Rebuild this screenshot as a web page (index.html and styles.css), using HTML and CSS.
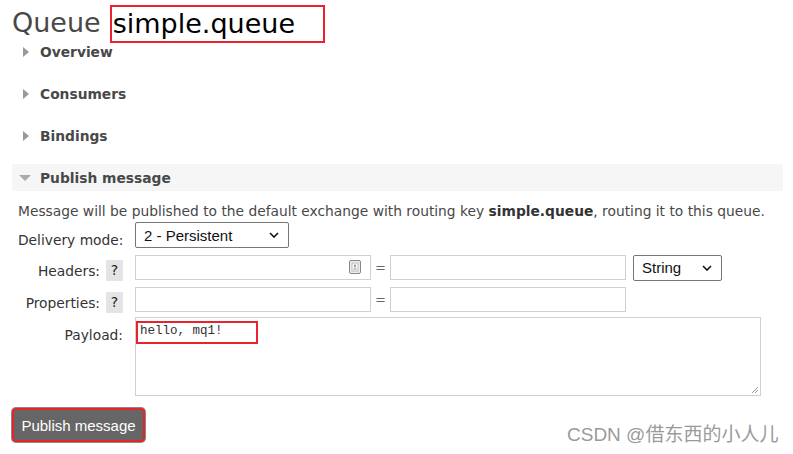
FILE: index.html
```html
<!DOCTYPE html>
<html>
<head>
<meta charset="utf-8">
<link rel="stylesheet" href="styles.css">
</head>
<body>
<div class="page">
  <h1 class="title"><span class="t-label">Queue</span><span class="t-name">simple.queue</span></h1>

  <div class="section"><div class="sec-head"><span class="tri-right"></span>Overview</div></div>
  <div class="section"><div class="sec-head"><span class="tri-right"></span>Consumers</div></div>
  <div class="section"><div class="sec-head"><span class="tri-right"></span>Bindings</div></div>
  <div class="section open">
    <div class="sec-head"><span class="tri-down"></span>Publish message</div>
    <div class="sec-body">
      <p class="note">Message will be published to the default exchange with routing key <b>simple.queue</b>, routing it to this queue.</p>
      <div class="form">
        <div class="lbl lbl-delivery">Delivery mode:</div>
        <div class="fld"><div class="select sel-mode"><span>2 - Persistent</span><svg width="10" height="6" viewBox="0 0 10 6"><path d="M1 1l4 4 4-4" fill="none" stroke="#111" stroke-width="1.6"/></svg></div></div>

        <div class="lbl"><span class="ltxt">Headers:</span> <span class="help">?</span></div>
        <div class="fld kv">
          <div class="input in-key"><span class="kicon"><svg width="12" height="14" viewBox="0 0 12 14"><rect x="0.5" y="0.5" width="11" height="13" rx="1.5" fill="#eee" stroke="#888"/><rect x="3" y="3" width="6" height="8" fill="#fff" stroke="#aaa" stroke-width="0.8"/><path d="M6 4.5v3" stroke="#666" stroke-width="1.2"/><path d="M4.5 9h3" stroke="#888" stroke-width="1"/></svg></span></div>
          <span class="eq">=</span>
          <div class="input in-val"></div>
          <div class="select sel-type"><span>String</span><svg width="10" height="6" viewBox="0 0 10 6"><path d="M1 1l4 4 4-4" fill="none" stroke="#111" stroke-width="1.6"/></svg></div>
        </div>

        <div class="lbl"><span class="ltxt">Properties:</span> <span class="help">?</span></div>
        <div class="fld kv">
          <div class="input in-key"></div>
          <span class="eq">=</span>
          <div class="input in-val"></div>
        </div>

        <div class="lbl lbl-payload">Payload:</div>
        <div class="fld"><div class="textarea"><span class="mark">hello, mq1!</span><svg class="grip" width="8" height="8" viewBox="0 0 8 8"><path d="M7 1L1 7M7 4L4 7" stroke="#999" stroke-width="1"/></svg></div></div>
      </div>
      <button class="btn">Publish message</button>
    </div>
  </div>
</div>
<div class="watermark">CSDN @借东西的小人儿</div>
</body>
</html>
```

FILE: styles.css
```css
* { box-sizing: border-box; }
html, body { margin: 0; padding: 0; background: #fff; }
body {
  width: 793px;
  height: 454px;
  overflow: hidden;
  position: relative;
  font-family: "DejaVu Sans", Verdana, sans-serif;
  color: #484848;
}
.page { padding: 0 10px 0 12px; }

.title {
  margin: 0;
  padding-top: 5px;
  height: 38px;
  font-weight: normal;
  font-size: 27px;
  display: flex;
  align-items: flex-start;
}
.t-label { color: #484848; line-height: 36px; }
.t-name {
  color: #000;
  margin-left: 9px;
  border: 2px solid #e8232e;
  height: 38px;
  flex-shrink: 0;
  line-height: 33px;
  padding: 0 28px 0 1px;
}

.section { margin-bottom: 15px; }
.sec-head {
  height: 27px;
  display: flex;
  align-items: center;
  font-weight: bold;
  font-size: 13.8px;
  color: #484848;
  padding-left: 11px;
}
.tri-right {
  width: 0; height: 0;
  border-top: 5px solid transparent;
  border-bottom: 5px solid transparent;
  border-left: 6px solid #999;
  margin-right: 11px;
}
.tri-down {
  width: 0; height: 0;
  border-left: 6px solid transparent;
  border-right: 6px solid transparent;
  border-top: 6px solid #aaa;
  margin-left: -4px;
  margin-right: 9px;
}
.open .sec-head { background: #f6f6f6; }

.sec-body { padding-left: 6px; }
.note { margin: 10px 0 0; font-size: 13.8px; line-height: 20px; color: #484848; white-space: nowrap; }
.note b { color: #333; }

.form {
  display: grid;
  grid-template-columns: 105px auto;
  column-gap: 12px;
  row-gap: 6px;
  margin-top: 1px;
  align-items: center;
}
.lbl {
  font-size: 13.8px;
  color: #333;
  text-align: right;
  white-space: nowrap;
  display: flex;
  align-items: center;
  justify-content: flex-end;
  gap: 6px;
  height: 26px;
}
.ltxt { margin-top: 7px; }
.lbl-delivery { justify-content: flex-start; padding-top: 9px; margin-right: -6px; }
.lbl-payload { align-self: start; padding-top: 7px; }
.help {
  display: inline-flex;
  width: 17px;
  height: 21px;
  background: #e4e4e4;
  align-items: center;
  justify-content: center;
  font-size: 14px;
  color: #222;
  margin-top: 6px;
}
.fld { display: flex; align-items: center; }
.select {
  height: 26px;
  border: 1px solid #767676;
  border-radius: 2px;
  font-family: "Liberation Sans", Arial, sans-serif;
  font-size: 15px;
  color: #111;
  display: flex;
  align-items: center;
  justify-content: space-between;
  padding: 0 9px 0 8px;
  background: #fff;
}
.sel-mode { width: 154px; }
.sel-type { width: 89px; margin-left: 7px; margin-top: 1px; padding-left: 8px; }

.kv { height: 26px; }
.input {
  height: 25px;
  border: 1px solid #d0d0d0;
  background: #fff;
}
.in-key { width: 236px; display: flex; justify-content: flex-end; align-items: center; padding-right: 9px; }
.in-val { width: 236px; }
.kicon { display: flex; }
.eq { width: 19px; text-align: center; font-size: 13px; color: #666; }

.textarea {
  width: 626px;
  height: 79px;
  border: 1px solid #d0d0d0;
  margin-top: -1px;
  position: relative;
  padding: 1px 0 0 0;
}
.mark {
  display: inline-block;
  width: 122px;
  height: 23px;
  border: 2px solid #e8232e;
  font-family: "Liberation Mono", "Courier New", monospace;
  font-size: 12.5px;
  line-height: 17px;
  color: #333;
  padding-left: 2px;
}
.grip { position: absolute; right: 1px; bottom: 1px; }

.btn {
  margin: 12px 0 0 -6px;
  width: 133px;
  height: 34px;
  background: #666;
  border: 2px solid #e8232e;
  border-radius: 4px;
  box-shadow: 0 0 0 1px #888;
  color: #fff;
  font-family: "Liberation Sans", Arial, sans-serif;
  font-size: 15px;
  padding: 0;
}

.watermark {
  position: absolute;
  left: 567px;
  top: 419px;
  font-family: "Liberation Sans", "Noto Sans CJK SC", sans-serif;
  font-size: 19px;
  color: #9a9a9a;
  text-shadow: 1px 1px 0 #fff;
  white-space: nowrap;
}
```
